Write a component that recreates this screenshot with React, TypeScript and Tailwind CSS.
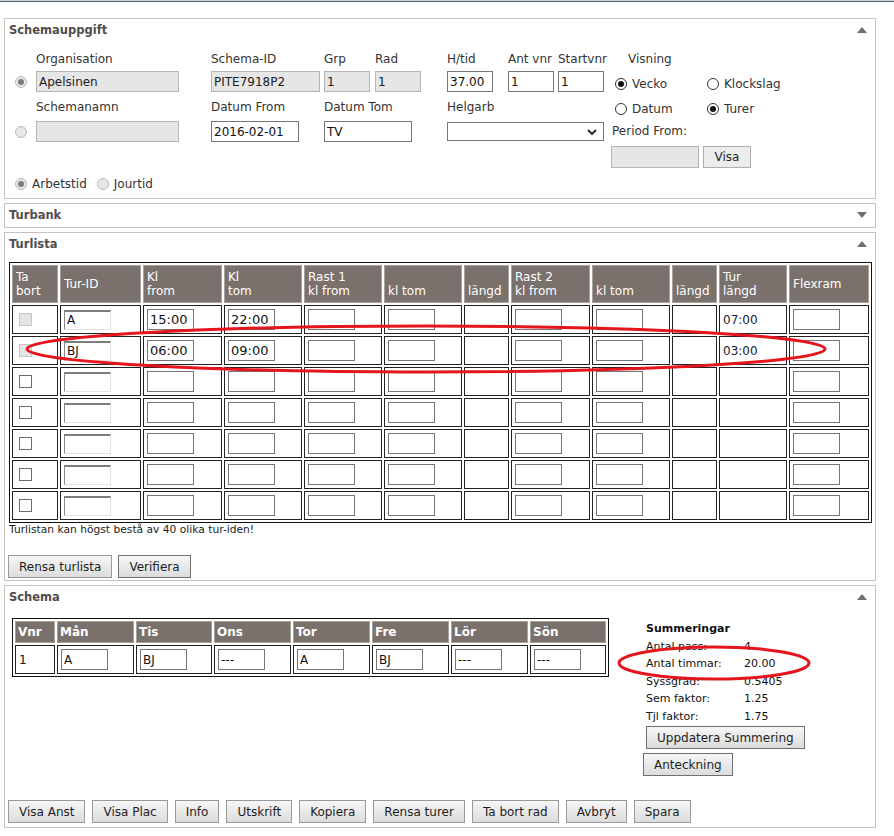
import React from "react";

type TurRow = { dis?: boolean; id?: string; from?: string; tom?: string; len?: string };

const TUR_ROWS: TurRow[] = [
  { dis: true, id: "A", from: "15:00", tom: "22:00", len: "07:00" },
  { dis: true, id: "BJ", from: "06:00", tom: "09:00", len: "03:00" },
  {},
  {},
  {},
  {},
  {},
];

const TUR_HEAD = [
  { w: "w-[46px]", l1: "Ta", l2: "bort" },
  { w: "w-[81px]", l1: "Tur-ID" },
  { w: "w-[79px]", l1: "Kl", l2: "from" },
  { w: "w-[78px]", l1: "Kl", l2: "tom" },
  { w: "w-[78px]", l1: "Rast 1", l2: "kl from" },
  { w: "w-[78px]", l1: "\u00a0", l2: "kl tom" },
  { w: "w-[45px]", l1: "\u00a0", l2: "längd" },
  { w: "w-[79px]", l1: "Rast 2", l2: "kl from" },
  { w: "w-[78px]", l1: "\u00a0", l2: "kl tom" },
  { w: "w-[45px]", l1: "\u00a0", l2: "längd" },
  { w: "w-[68px]", l1: "Tur", l2: "längd" },
  { w: "w-[80px]", l1: "Flexram" },
];

const SCHEMA_HEAD = [
  { w: "w-[40px]", t: "Vnr" },
  { w: "w-[77px]", t: "Mån" },
  { w: "w-[76px]", t: "Tis" },
  { w: "w-[77px]", t: "Ons" },
  { w: "w-[77px]", t: "Tor" },
  { w: "w-[77px]", t: "Fre" },
  { w: "w-[77px]", t: "Lör" },
  { w: "w-[76px]", t: "Sön" },
];

const SCHEMA_VALUES = ["A", "BJ", "---", "A", "BJ", "---", "---"];

const SUMMERING = [
  ["Antal pass:", "4"],
  ["Antal timmar:", "20.00"],
  ["Syssgrad:", "0.5405"],
  ["Sem faktor:", "1.25"],
  ["Tjl faktor:", "1.75"],
];

const label = "text-[12px] leading-[14px] text-[#333]";
const whiteInput =
  "block h-[21px] border border-[#767676] bg-white px-[2px] text-[12px] text-[#111] outline-none";
const grayInput =
  "block h-[21px] border border-[#b5b5b5] bg-[#e6e6e6] px-[2px] text-[12px] text-[#222] outline-none";
const insetInput =
  "block h-[20px] w-[47px] border border-[#e2e2e2] border-t-2 border-t-[#7d7d7d] border-l-[#8a8a8a] bg-white px-[2px] text-[12px] text-[#111] outline-none";

function Radio({ checked, disabled }: { checked?: boolean; disabled?: boolean }) {
  return (
    <span
      className={`flex h-[12px] w-[12px] shrink-0 items-center justify-center rounded-full border ${
        disabled ? "border-[#b9b9b9] bg-[#e7e7e7]" : "border-[#333] bg-white"
      }`}
    >
      {checked ? (
        <span
          className={`h-[6px] w-[6px] rounded-full ${disabled ? "bg-[#7c7c7c]" : "bg-[#111]"}`}
        />
      ) : null}
    </span>
  );
}

function Tri({ up }: { up?: boolean }) {
  return (
    <svg width="10" height="6" viewBox="0 0 10 6" aria-hidden>
      <polygon points={up ? "0,6 10,6 5,0" : "0,0 10,0 5,6"} fill="#6f6f6f" />
    </svg>
  );
}

function Btn({
  children,
  dark,
  className = "",
}: {
  children: React.ReactNode;
  dark?: boolean;
  className?: string;
}) {
  return (
    <button
      type="button"
      className={`h-[23px] border ${
        dark ? "border-[#707070]" : "border-[#9a9a9a]"
      } bg-linear-to-b from-[#f6f6f6] to-[#dcdcdc] px-[10px] text-[12px] leading-[14px] whitespace-nowrap text-[#1e1e1e] ${className}`}
    >
      {children}
    </button>
  );
}

function Panel({
  title,
  up,
  className = "",
  children,
}: {
  title: string;
  up?: boolean;
  className?: string;
  children?: React.ReactNode;
}) {
  return (
    <section className={`w-[872px] border border-[#c3c3c3] bg-white ${className}`}>
      <div className="flex h-[18px] items-end justify-between pr-[8px] pl-[4px]">
        <h2 className="text-[11.5px] leading-[14px] font-bold text-[#4d4d4d]">{title}</h2>
        <span className="mb-[4px]">
          <Tri up={up} />
        </span>
      </div>
      {children}
    </section>
  );
}

function Schemauppgift() {
  return (
    <Panel title="Schemauppgift" up>
      <div className="mt-[15px] grid grid-cols-[21px_175px_113px_51px_72px_61px_50px_53px_1fr] grid-rows-[14px_26px_22px_28px_26px] items-end pl-[10px]">
        <span className={`${label} col-start-2 row-start-1`}>Organisation</span>
        <span className={`${label} col-start-3 row-start-1`}>Schema-ID</span>
        <span className={`${label} col-start-4 row-start-1`}>Grp</span>
        <span className={`${label} col-start-5 row-start-1`}>Rad</span>
        <span className={`${label} col-start-6 row-start-1`}>H/tid</span>
        <span className={`${label} col-start-7 row-start-1`}>Ant vnr</span>
        <span className={`${label} col-start-8 row-start-1 whitespace-nowrap`}>Startvnr</span>
        <span className={`${label} col-start-9 row-start-1 pl-[17px]`}>Visning</span>

        <div className="col-start-1 row-start-2 mb-[4px]">
          <Radio checked disabled />
        </div>
        <input readOnly value="Apelsinen" className={`${grayInput} col-start-2 row-start-2 w-[143px]`} />
        <input readOnly value="PITE7918P2" className={`${grayInput} col-start-3 row-start-2 w-[109px]`} />
        <input readOnly value="1" className={`${grayInput} col-start-4 row-start-2 w-[46px]`} />
        <input readOnly value="1" className={`${grayInput} col-start-5 row-start-2 w-[46px]`} />
        <input readOnly value="37.00" className={`${whiteInput} col-start-6 row-start-2 w-[46px]`} />
        <input readOnly value="1" className={`${whiteInput} col-start-7 row-start-2 w-[46px]`} />
        <input readOnly value="1" className={`${whiteInput} col-start-8 row-start-2 w-[46px]`} />
        <div className="col-start-9 row-start-2 -mb-[2px] flex h-[21px] items-center pl-[4px]">
          <div className="flex w-[92px] items-center gap-[5px]">
            <Radio checked />
            <span className={label}>Vecko</span>
          </div>
          <div className="flex items-center gap-[5px]">
            <Radio />
            <span className={label}>Klockslag</span>
          </div>
        </div>

        <span className={`${label} col-start-2 row-start-3`}>Schemanamn</span>
        <span className={`${label} col-start-3 row-start-3`}>Datum From</span>
        <span className={`${label} col-span-2 col-start-4 row-start-3`}>Datum Tom</span>
        <span className={`${label} col-span-3 col-start-6 row-start-3`}>Helgarb</span>
        <div className="col-start-9 row-start-3 -mb-[2px] flex h-[14px] items-center pl-[4px]">
          <div className="flex w-[92px] items-center gap-[5px]">
            <Radio />
            <span className={label}>Datum</span>
          </div>
          <div className="flex items-center gap-[5px]">
            <Radio checked />
            <span className={label}>Turer</span>
          </div>
        </div>

        <div className="col-start-1 row-start-4 mb-[4px]">
          <Radio disabled />
        </div>
        <input readOnly value="" className={`${grayInput} col-start-2 row-start-4 w-[143px]`} />
        <input readOnly value="2016-02-01" className={`${whiteInput} col-start-3 row-start-4 w-[88px]`} />
        <input readOnly value="TV" className={`${whiteInput} col-span-2 col-start-4 row-start-4 w-[88px]`} />
        <div className="col-span-3 col-start-6 row-start-4 mb-[1px] flex h-[19px] w-[157px] items-center border border-[#767676] bg-white">
          <svg className="mr-[6px] ml-auto" width="10" height="6" viewBox="0 0 10 6" aria-hidden>
            <polyline points="1,1 5,5 9,1" fill="none" stroke="#222" strokeWidth="1.8" />
          </svg>
        </div>
        <span className={`${label} col-start-9 row-start-4 mb-[4px] pl-[1px]`}>Period From:</span>

        <div className="col-start-9 row-start-5 flex items-center gap-[4px]">
          <input readOnly value="" className={`${grayInput} h-[22px] w-[88px]`} />
          <button
            type="button"
            className="h-[22px] w-[48px] border border-[#adadad] bg-[#ececec] text-[12px] text-[#1e1e1e]"
          >
            Visa
          </button>
        </div>
      </div>

      <div className="mt-[9px] flex items-center pb-[7px] pl-[10px]">
        <Radio checked disabled />
        <span className={`${label} ml-[5px]`}>Arbetstid</span>
        <span className="ml-[10px]">
          <Radio disabled />
        </span>
        <span className={`${label} ml-[5px]`}>Jourtid</span>
      </div>
    </Panel>
  );
}

function Turlista() {
  return (
    <Panel title="Turlista" up className="mt-[4px]">
      <table className="mt-[11px] ml-[4px] w-[863px] table-fixed border-separate border-spacing-[2px] border border-[#111]">
        <thead>
          <tr>
            {TUR_HEAD.map((h, i) => (
              <th
                key={i}
                className={`${h.w} h-[38px] border border-[#a8a29d] bg-[#7b716c] pl-[3px] text-left align-middle text-[12px] leading-[14px] font-normal text-white`}
              >
                {h.l1}
                {h.l2 ? (
                  <>
                    <br />
                    {h.l2}
                  </>
                ) : null}
              </th>
            ))}
          </tr>
        </thead>
        <tbody>
          {TUR_ROWS.map((r, i) => (
            <tr key={i}>
              <td className="h-[29px] border border-[#222] p-[3px] align-middle">
                <span
                  className={`ml-[3px] block h-[13px] w-[13px] border ${
                    r.dis ? "border-[#c6c6c6] bg-[#e4e4e4]" : "border-[#6d6d6d] bg-white"
                  }`}
                />
              </td>
              <td className="border border-[#222] p-[3px] align-middle">
                <input readOnly value={r.id ?? ""} className={insetInput} />
              </td>
              <td className="border border-[#222] p-[3px] align-middle">
                <input readOnly value={r.from ?? ""} className={`${whiteInput} w-[47px] text-[13px]`} />
              </td>
              <td className="border border-[#222] p-[3px] align-middle">
                <input readOnly value={r.tom ?? ""} className={`${whiteInput} w-[47px] text-[13px]`} />
              </td>
              <td className="border border-[#222] p-[3px] align-middle">
                <input readOnly value="" className={`${whiteInput} w-[47px]`} />
              </td>
              <td className="border border-[#222] p-[3px] align-middle">
                <input readOnly value="" className={`${whiteInput} w-[47px]`} />
              </td>
              <td className="border border-[#222] p-[3px]" />
              <td className="border border-[#222] p-[3px] align-middle">
                <input readOnly value="" className={`${whiteInput} w-[47px]`} />
              </td>
              <td className="border border-[#222] p-[3px] align-middle">
                <input readOnly value="" className={`${whiteInput} w-[47px]`} />
              </td>
              <td className="border border-[#222] p-[3px]" />
              <td className="border border-[#222] p-[3px] align-middle text-[12px] text-[#1a1a2e]">
                {r.len ?? ""}
              </td>
              <td className="border border-[#222] p-[3px] align-middle">
                <input readOnly value="" className={`${whiteInput} w-[47px]`} />
              </td>
            </tr>
          ))}
        </tbody>
      </table>
      <p className="pl-[4px] text-[10.7px] leading-[13px] text-[#222]">
        Turlistan kan högst bestå av 40 olika tur-iden!
      </p>
      <div className="mt-[19px] flex gap-[6px] pb-[2px] pl-[3px]">
        <Btn>Rensa turlista</Btn>
        <Btn dark>Verifiera</Btn>
      </div>
    </Panel>
  );
}

function Schema() {
  return (
    <Panel title="Schema" up className="mt-[4px]">
      <div className="mt-[14px] flex items-start pl-[7px]">
        <table className="w-[597px] table-fixed border-separate border-spacing-[2px] border border-[#111]">
          <thead>
            <tr>
              {SCHEMA_HEAD.map((h) => (
                <th
                  key={h.t}
                  className={`${h.w} h-[22px] border border-[#a8a29d] bg-[#7b716c] pl-[2px] text-left align-middle text-[12px] leading-[14px] font-bold text-white`}
                >
                  {h.t}
                </th>
              ))}
            </tr>
          </thead>
          <tbody>
            <tr>
              <td className="border border-[#222] p-[3px] align-middle text-[12px] text-[#111]">1</td>
              {SCHEMA_VALUES.map((v, i) => (
                <td key={i} className="border border-[#222] p-[3px] align-middle">
                  <input readOnly value={v} className={`${whiteInput} w-[47px]`} />
                </td>
              ))}
            </tr>
          </tbody>
        </table>

        <div className="mt-[2px] ml-[37px] text-[11px] leading-[17.5px] text-[#111]">
          <div className="font-bold">Summeringar</div>
          {SUMMERING.map(([k, v]) => (
            <div key={k} className="flex">
              <span className="w-[98px]">{k}</span>
              <span>{v}</span>
            </div>
          ))}
          <Btn dark className="mt-[1px] block">
            Uppdatera Summering
          </Btn>
          <Btn dark className="mt-[4px] -ml-[3px] block">
            Anteckning
          </Btn>
        </div>
      </div>

      <div className="mt-[24px] flex gap-[7px] pb-[4px] pl-[3px]">
        <Btn>Visa Anst</Btn>
        <Btn>Visa Plac</Btn>
        <Btn>Info</Btn>
        <Btn>Utskrift</Btn>
        <Btn>Kopiera</Btn>
        <Btn>Rensa turer</Btn>
        <Btn>Ta bort rad</Btn>
        <Btn>Avbryt</Btn>
        <Btn>Spara</Btn>
      </div>
    </Panel>
  );
}

export default function App() {
  return (
    <div className="relative min-h-[836px] w-[894px] bg-white font-['DejaVu_Sans',sans-serif]">
      <div className="h-[2px] border-b border-[#56616e] bg-[#cdd2d8]" />
      <div className="px-[4px] pt-[16px]">
        <Schemauppgift />
        <Panel title="Turbank" className="mt-[4px]">
          <div className="h-[5px]" />
        </Panel>
        <Turlista />
        <Schema />
      </div>

      {/* hand-drawn red marks from the original screenshot */}
      <svg
        className="pointer-events-none absolute top-0 left-0"
        width="894"
        height="836"
        viewBox="0 0 894 836"
        aria-hidden
      >
        <ellipse cx="426" cy="349" rx="399" ry="23" fill="none" stroke="#e5151d" strokeWidth="3" />
        <ellipse cx="714" cy="663" rx="95" ry="16" fill="none" stroke="#e5151d" strokeWidth="3" />
      </svg>
    </div>
  );
}
